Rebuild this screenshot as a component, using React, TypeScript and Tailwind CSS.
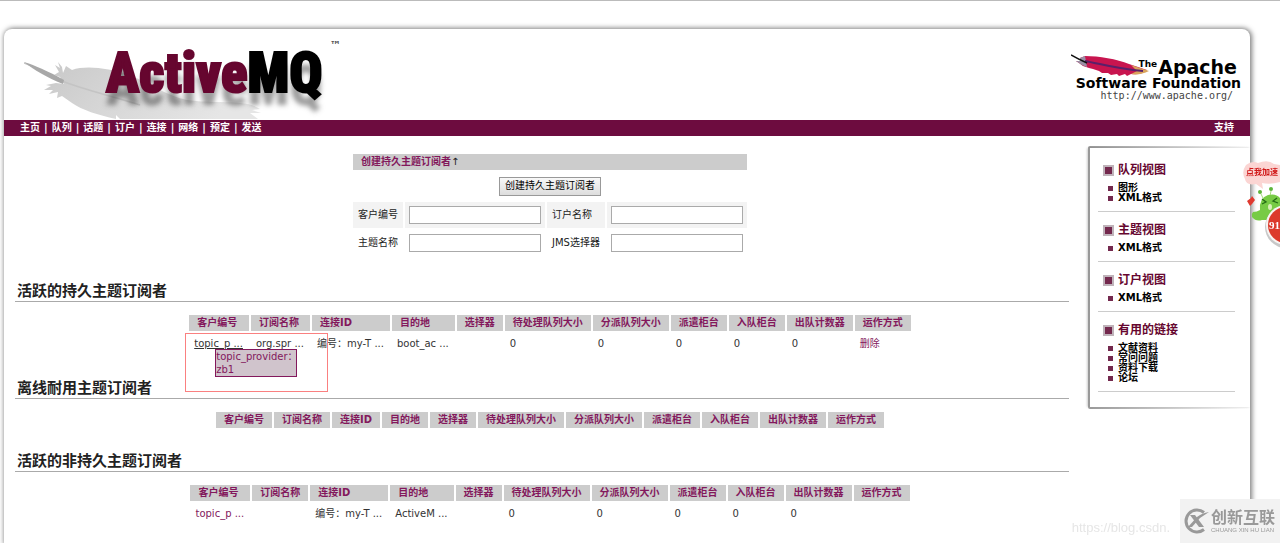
import React from 'react';

interface SubscriberRow {
  clientId: string;
  clientIdTip?: string;
  subscription: string;
  connectionId: string;
  destination: string;
  counters: string[];
  removable?: boolean;
}

interface SubscriberSectionProps {
  title: string;
  rows: SubscriberRow[];
}

interface SideGroupProps {
  title: string;
  links: string[];
}

const NAV_ITEMS = ['主页', '队列', '话题', '订户', '连接', '网络', '预定', '发送'];

const COLUMNS = [
  '客户编号', '订阅名称', '连接ID', '目的地', '选择器', '待处理队列大小',
  '分派队列大小', '派遣柜台', '入队柜台', '出队计数器', '运作方式',
];

const SIDE_GROUPS: SideGroupProps[] = [
  { title: '队列视图', links: ['图形', 'XML格式'] },
  { title: '主题视图', links: ['XML格式'] },
  { title: '订户视图', links: ['XML格式'] },
  { title: '有用的链接', links: ['文献资料', '常问问题', '资料下载', '论坛'] },
];

const ACTIVE_DURABLE: SubscriberRow[] = [
  {
    clientId: 'topic_p ...',
    clientIdTip: 'topic_provider：zb1',
    subscription: 'org.spr ...',
    connectionId: '编号：my-T ...',
    destination: 'boot_ac ...',
    counters: ['0', '0', '0', '0', '0'],
    removable: true,
  },
];

const ACTIVE_NON_DURABLE: SubscriberRow[] = [
  {
    clientId: 'topic_p ...',
    subscription: '',
    connectionId: '编号：my-T ...',
    destination: 'ActiveM ...',
    counters: ['0', '0', '0', '0', '0'],
  },
];

const ActiveMQLogo: React.FC = () => (
  <a href="#" className="relative block h-[90px] w-[345px]">
    <svg className="absolute left-5 top-6" width="250" height="66" viewBox="0 0 250 66">
      <defs>
        <linearGradient id="greyFeather" x1="0" y1="0" x2="1" y2="0.3">
          <stop offset="0" stopColor="#c8c8c8" />
          <stop offset="0.45" stopColor="#d6d6d6" />
          <stop offset="1" stopColor="#e6e6e6" />
        </linearGradient>
      </defs>
      <path
        d="M40 31 L36 24 L30 22 L35 19 L31 12 L36 15 L34 9 L38 14 L39 20 L42 13 L48 17 C62 12 84 15 106 22 C128 32 144 43 163 47 C190 51 222 46 236 56 L228 57 L237 60 L226 60 L234 66 L96 66 L92 62 L92 66 C74 62 58 57 48 50 L38 43 L33 45 L34 39 L25 41 L29 37 L20 37 L27 33 L22 32 L32 30 Z"
        fill="url(#greyFeather)"
      />
      <path d="M0 10 C12 14 24 21 38 28 C58 36 84 42 116 52" fill="none" stroke="#c4c4c4" strokeWidth="1.5" />
      <path d="M0 9 C10 12 24 18 40 27 L39 31 C24 25 10 17 0 9 Z" fill="#a8a8a8" />
    </svg>
    <span className="absolute left-[102px] top-3 font-['Impact','Roboto_Condensed','Roboto',sans-serif] text-[55px] leading-[64px] font-black text-[#66062f] [-webkit-text-stroke:2px_currentColor] [text-shadow:0_13px_5px_rgba(60,60,60,0.5)]">
      Active<span className="text-black">MQ</span>
    </span>
    <span className="absolute left-[326px] top-[10px] text-[11px] font-bold text-[#555]">™</span>
  </a>
);

const ApacheLogo: React.FC = () => (
  <a href="#" className="mr-[9px] mt-[25px] block w-[172px] text-black">
    <span className="flex items-start justify-end pr-1">
      <svg className="shrink-0" width="80" height="24" viewBox="0 0 80 22">
        <path
          d="M8 8 L5 6 L10 6 L9 3 L14 1 C28 1 46 4 58 9 C64 11 70 13 76 15 C72 19 66 20 60 19 L56 21 L54 19 L48 21 L46 19 L40 20 L37 18 L31 18 L28 16 L22 14 L18 13 L12 11 Z"
          fill="#c8154f"
        />
        <path d="M8 8 L5 6 L10 6 L9 3 L14 1 L16 12 L11 10 Z" fill="#9a8fa5" />
        <path d="M60 10 C66 12 72 14 78 16 C72 19 66 20 60 19 L66 16 Z" fill="#d9a45c" />
        <path d="M14 6 C30 9 46 14 72 16" fill="none" stroke="#59206a" strokeWidth="2" />
        <path d="M0 0 C5 3 9 5 16 8" fill="none" stroke="#111" strokeWidth="1.5" />
      </svg>
      <span className="-ml-3 mt-1 text-[9px] leading-[12px] font-bold">The</span>
      <span className="ml-px text-[19px] leading-[26px] font-bold">Apache</span>
    </span>
    <span className="-mt-1 block text-right text-[14px] leading-[14px] font-bold whitespace-nowrap">
      Software Foundation
    </span>
    <span className="block pr-2 text-right font-['DejaVu_Sans_Mono',monospace] text-[10px] leading-[12px] text-[#444]">
      http://www.apache.org/
    </span>
  </a>
);

const SubscriberSection: React.FC<SubscriberSectionProps> = ({ title, rows }) => (
  <section className="mb-[17px]">
    <h2 className="mb-[11px] h-[25px] border-b border-[#aaa] pt-1 pl-0.5 text-[15px] leading-5 font-bold text-[#222]">
      {title}
    </h2>
    <div className="flex justify-center pl-4">
      <table className="border-separate border-spacing-[2px] text-left whitespace-nowrap">
        <thead>
          <tr>
            {COLUMNS.map((column) => (
              <th key={column} className="h-4 bg-[#ccc] px-2 py-0 leading-4 font-bold text-[#83185c]">
                {column}
              </th>
            ))}
          </tr>
        </thead>
        <tbody>
          {rows.map((row) => (
            <tr key={row.destination} className="h-[22px] text-[#333]">
              <td className="relative pr-1.5 pl-[5px]">
                <a href="#" className={row.clientIdTip ? 'text-[#333] underline' : 'text-[#83185c]'}>
                  {row.clientId}
                </a>
                {row.clientIdTip && (
                  <>
                    <span className="absolute left-[26px] top-4 z-10 w-[82px] border border-[#83185c] bg-[#d0c4cc] leading-[13px] whitespace-normal text-[#83185c]">
                      {row.clientIdTip}
                    </span>
                    <span className="absolute -left-1 top-0 z-20 h-[59px] w-[143px] border border-[#fa8080]" />
                  </>
                )}
              </td>
              <td className="pr-1.5 pl-[5px]">{row.subscription}</td>
              <td className="pr-1.5 pl-[5px]">{row.connectionId}</td>
              <td className="pr-1.5 pl-[5px]">{row.destination}</td>
              <td />
              {row.counters.map((value, i) => (
                <td key={i} className="pr-1.5 pl-[5px]">{value}</td>
              ))}
              <td className="pr-1.5 pl-[5px]">
                {row.removable && <a href="#" className="text-[#83185c]">删除</a>}
              </td>
            </tr>
          ))}
        </tbody>
      </table>
    </div>
  </section>
);

const FormField: React.FC<{ id: string; label: string }> = ({ id, label }) => (
  <>
    <td className="px-[5px] py-0">
      <label htmlFor={id}>{label}</label>
    </td>
    <td className="px-1 py-0">
      <input id={id} type="text" className="block h-[18px] w-[132px] border border-[#aaa] bg-white px-1" />
    </td>
  </>
);

const CreateForm: React.FC = () => (
  <form className="flex justify-center pl-4" onSubmit={(e) => e.preventDefault()}>
    <table className="border-separate border-spacing-[2px] text-left text-[#222]">
      <thead>
        <tr>
          <th colSpan={4} className="h-4 bg-[#ccc] px-2 py-0 leading-4 font-bold">
            <a href="#" className="text-[#83185c]">创建持久主题订阅者</a>
            <span className="font-normal">↑</span>
          </th>
        </tr>
      </thead>
      <tbody>
        <tr className="h-7">
          <td colSpan={4} className="text-center">
            <button
              type="submit"
              className="h-[19px] border border-[#999] bg-linear-to-b from-[#f8f8f8] to-[#ddd] px-[5px] align-middle leading-4 text-black"
            >
              创建持久主题订阅者
            </button>
          </td>
        </tr>
        <tr className="h-[26px] [&>td]:bg-[#f3f3f3]">
          <FormField id="clientId" label="客户编号" />
          <FormField id="subscriberName" label="订户名称" />
        </tr>
        <tr className="h-[26px]">
          <FormField id="topicName" label="主题名称" />
          <FormField id="selector" label="JMS选择器" />
        </tr>
      </tbody>
    </table>
  </form>
);

const SideGroup: React.FC<SideGroupProps> = ({ title, links }) => (
  <div className="border-b border-[#ccc] pt-[10px] pb-2">
    <h3 className="mb-[5px] flex h-4 items-center gap-1 pl-[5px] text-[12px] leading-4 font-bold text-[#66062f]">
      <span className="size-[11px] border-2 border-[#bfb3ba] bg-[#73284d]" />
      {title}
    </h3>
    <ul>
      {links.map((link) => (
        <li key={link} className="flex h-[10px] items-center gap-[5px] pl-[10px] leading-[10px] font-bold">
          <span className="size-[5px] bg-[#73284d]" />
          <a href="#" className="text-black">{link}</a>
        </li>
      ))}
    </ul>
  </div>
);

const Sidebar: React.FC = () => (
  <aside className="mt-[10px] w-[162px] shrink-0 self-start">
    <div className="h-0.5 rounded-tl bg-linear-to-r from-[#999] to-transparent" />
    <div className="border-l-2 border-[#999] pt-1 pr-[15px] pb-[15px] pl-2 shadow-[-1px_0_2px_rgba(0,0,0,0.2)]">
      {SIDE_GROUPS.map((group) => (
        <SideGroup key={group.title} {...group} />
      ))}
    </div>
    <div className="h-0.5 rounded-bl bg-linear-to-r from-[#999] to-transparent" />
  </aside>
);

const Mascot: React.FC = () => (
  <div className="fixed top-[160px] right-0 z-30 h-[90px] w-[38px] overflow-hidden">
    <svg className="absolute inset-0" width="38" height="90" viewBox="0 0 38 90">
      <path d="M4 5 Q10 0 16 3 Q26 -1 32 4 L38 5 V22 Q28 25 20 23 L21 29 L14 24 Q4 26 3 19 Q-1 12 4 5 Z" fill="#fbd5d3" />
      <circle cx="18" cy="32" r="2" fill="#5fb53c" />
      <circle cx="29" cy="29" r="2" fill="#5fb53c" />
      <path d="M19 34 L21 38 M29 31 L28 36" stroke="#a5dc7d" strokeWidth="1" />
      <path d="M18 50 Q17 38 26 35 Q34 33 38 38 V60 H20 Q14 62 10 57 Q9 54 11 52 Q15 52 18 50 Z" fill="#77cb45" />
      <path d="M20 39 L24 42 L20 44 M35 38 L31 41 L36 43" fill="none" stroke="#246b14" strokeWidth="1.3" />
      <ellipse cx="28" cy="47" rx="2" ry="3" fill="#d9efb8" />
      <path d="M5 41 L9 38 L10 36 L13 40 L10 44 L8 46 Z" fill="#df3930" />
      <circle cx="44" cy="67" r="21" fill="#c8c8c8" />
      <circle cx="44" cy="65" r="20" fill="#f8f4f2" />
      <circle cx="44" cy="65" r="18" fill="#dc3a2b" />
    </svg>
    <span className="absolute left-1 top-1.5 text-[8px] leading-[14px] font-bold whitespace-nowrap text-[#d01818]">点我加速</span>
    <span className="absolute left-[27px] top-[57px] font-['Liberation_Serif',serif] text-[11px] leading-4 font-bold text-white">91</span>
  </div>
);

const Watermark: React.FC = () => (
  <div className="fixed right-0 bottom-0 z-30 flex items-end">
    <span className="mr-[10px] mb-[6px] font-['Liberation_Sans',sans-serif] text-[13px] leading-[18px] text-[#e6e6e6]">
      https://blog.csdn.
    </span>
    <div className="flex h-11 w-[100px] items-center gap-px bg-[#f2f2f2] pl-[3px] text-[#999]">
      <svg className="shrink-0" width="27" height="26" viewBox="0 0 27 26">
        <path d="M21 4.500 A11 11 0 1 0 21 21.500" fill="none" stroke="#999" strokeWidth="3" />
        <path d="M7 7 H12 L21 19 H16 Z" fill="#999" />
        <path d="M26 4 L17 10 L9 19 H5 L14 9 Q19 5 26 4 Z" fill="#999" />
      </svg>
      <span className="flex flex-col">
        <span className="text-[16px] leading-[18px] font-bold">创新互联</span>
        <span className="font-['Liberation_Sans',sans-serif] text-[6px] leading-[6px] whitespace-nowrap">CHUANG XIN HU LIAN</span>
      </span>
    </div>
  </div>
);

const App: React.FC = () => {
  return (
    <div className="flex h-screen flex-col overflow-hidden border-t border-[#bbb] bg-white font-['DejaVu_Sans','Noto_Sans_CJK_SC',sans-serif] text-[10px] leading-[14px]">
      <div className="mt-7 mr-[30px] ml-1 flex-1 rounded-t-lg bg-white shadow-[1px_0_5px_1px_rgba(0,0,0,0.5)]">
        <header className="flex h-[91px] items-start justify-between">
          <ActiveMQLogo />
          <ApacheLogo />
        </header>

        <nav className="flex h-4 items-center justify-between bg-[#6d0c3f] px-4 leading-4 font-bold text-white">
          <ul className="flex gap-1">
            {NAV_ITEMS.map((item, i) => (
              <li key={item} className="flex gap-1">
                {i > 0 && <span>|</span>}
                <a href="#">{item}</a>
              </li>
            ))}
          </ul>
          <a href="#">支持</a>
        </nav>

        <div className="flex">
          <main className="mr-[19px] ml-[11px] flex-1 pt-4">
            <div className="mb-[19px]">
              <CreateForm />
            </div>
            <SubscriberSection title="活跃的持久主题订阅者" rows={ACTIVE_DURABLE} />
            <SubscriberSection title="离线耐用主题订阅者" rows={[]} />
            <SubscriberSection title="活跃的非持久主题订阅者" rows={ACTIVE_NON_DURABLE} />
          </main>
          <Sidebar />
        </div>
      </div>

      <Mascot />
      <Watermark />
    </div>
  );
};

export default App;
